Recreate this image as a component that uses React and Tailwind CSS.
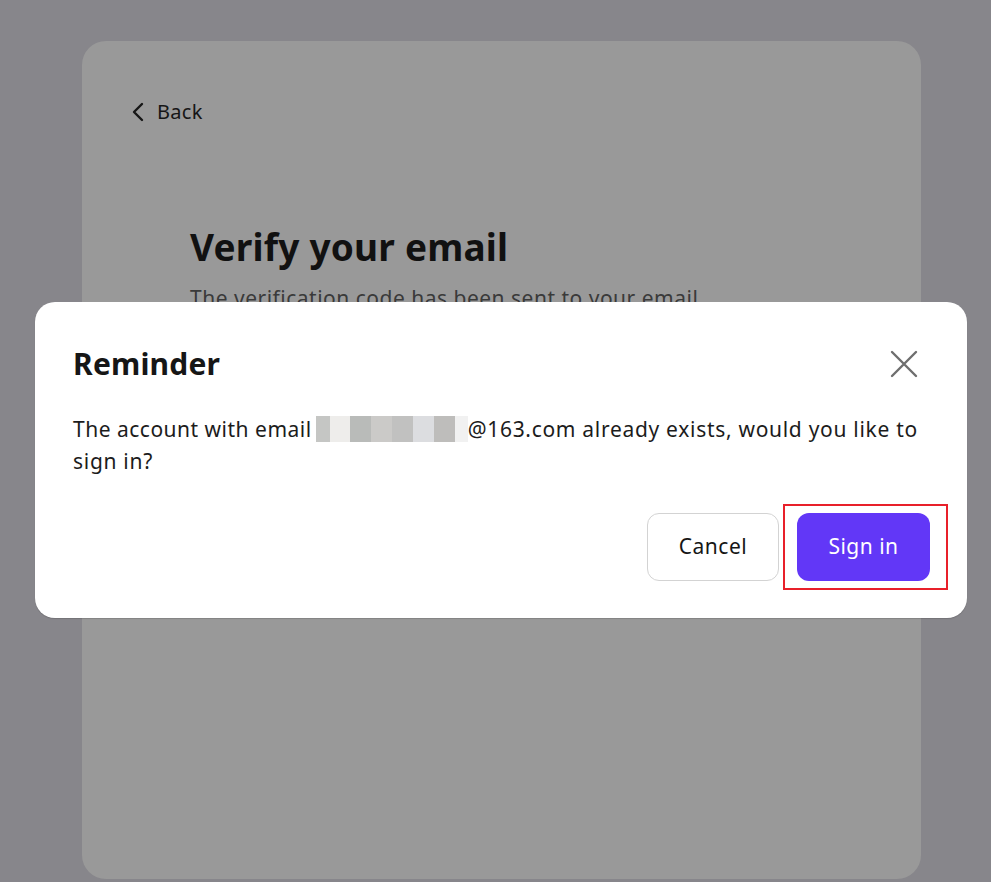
import React from "react";

export default function App() {
  const blocks = [
    ["w-[14px]", "bg-[#c5c6c4]"],
    ["w-[20px]", "bg-[#eeedeb]"],
    ["w-[21px]", "bg-[#b9bbb9]"],
    ["w-[21px]", "bg-[#cbcac8]"],
    ["w-[21px]", "bg-[#c1c1c0]"],
    ["w-[21px]", "bg-[#dcdde0]"],
    ["w-[21px]", "bg-[#bebdbb]"],
    ["w-[13px]", "bg-[#f1f1f1]"],
  ];
  return (
    <div
      className="relative w-[991px] h-[882px] overflow-hidden bg-[#87868b]"
      style={{ fontFamily: '"Noto Sans", "Open Sans", sans-serif' }}
    >
      <div className="ml-[82px] pt-[41px]">
        <div className="w-[839px] h-[838px] rounded-[24px] bg-[#999999] pt-[56px]">
          <div className="flex items-center gap-[12px] pl-[49px] text-[20px] tracking-[0.3px] text-[#161616]">
            <svg width="14" height="22" viewBox="0 0 14 22" fill="none">
              <path d="M11 3 L3 11 L11 19" stroke="#161616" strokeWidth="2.4" strokeLinecap="round" strokeLinejoin="round" />
            </svg>
            <span>Back</span>
          </div>
          <div className="pl-[108px] mt-[96px]">
            <h1 className="text-[37px] font-bold leading-[48px] tracking-[0.2px] text-[#111111]">Verify your email</h1>
            <p className="mt-[12px] text-[21px] tracking-[0.5px] text-[#3a3a3a]">
              The verification code has been sent to your email
            </p>
          </div>
        </div>
      </div>

      <div className="absolute left-[35px] top-[302px] w-[932px] h-[316px] rounded-[20px] bg-white shadow-[0_1px_1px_rgba(0,0,0,0.15)] pl-[38px] pr-[37px] pt-[40px]">
        <div className="flex items-start justify-between">
          <h2 className="text-[30px] font-bold leading-[44px] tracking-[0.2px] text-[#161616]">Reminder</h2>
          <svg className="mt-[8px] mr-[12px]" width="28" height="28" viewBox="0 0 28 28" fill="none">
            <path d="M2 2 L26 26 M26 2 L2 26" stroke="#6e6e6e" strokeWidth="2.4" strokeLinecap="round" />
          </svg>
        </div>
        <p className="mt-[27px] text-[21px] leading-[32px] tracking-[0.5px] text-[#1c1c1c]">
          The account with email
          <span className="inline-flex align-middle ml-[4px] h-[26px] -mt-[4px]">
            {blocks.map(([w, c], i) => (
              <span key={i} className={`${w} ${c} h-[26px] inline-block`} />
            ))}
          </span>
          <span className="tracking-[0.7px]">@163.com already exists, would you like to sign in?</span>
        </p>
        <div className="mt-[36px] flex justify-end gap-[18px]">
          <button className="w-[132px] h-[68px] rounded-[12px] border border-[#d3d3d3] bg-white text-[21px] tracking-[0.5px] text-[#161616]">
            Cancel
          </button>
          <div className="relative">
            <button className="w-[133px] h-[68px] rounded-[12px] bg-[#6237f7] text-[21px] tracking-[0.5px] text-white">
              Sign in
            </button>
            <div className="absolute left-[-14px] top-[-9px] w-[165px] h-[86px] border-2 border-[#e8202a] pointer-events-none" />
          </div>
        </div>
      </div>
    </div>
  );
}
